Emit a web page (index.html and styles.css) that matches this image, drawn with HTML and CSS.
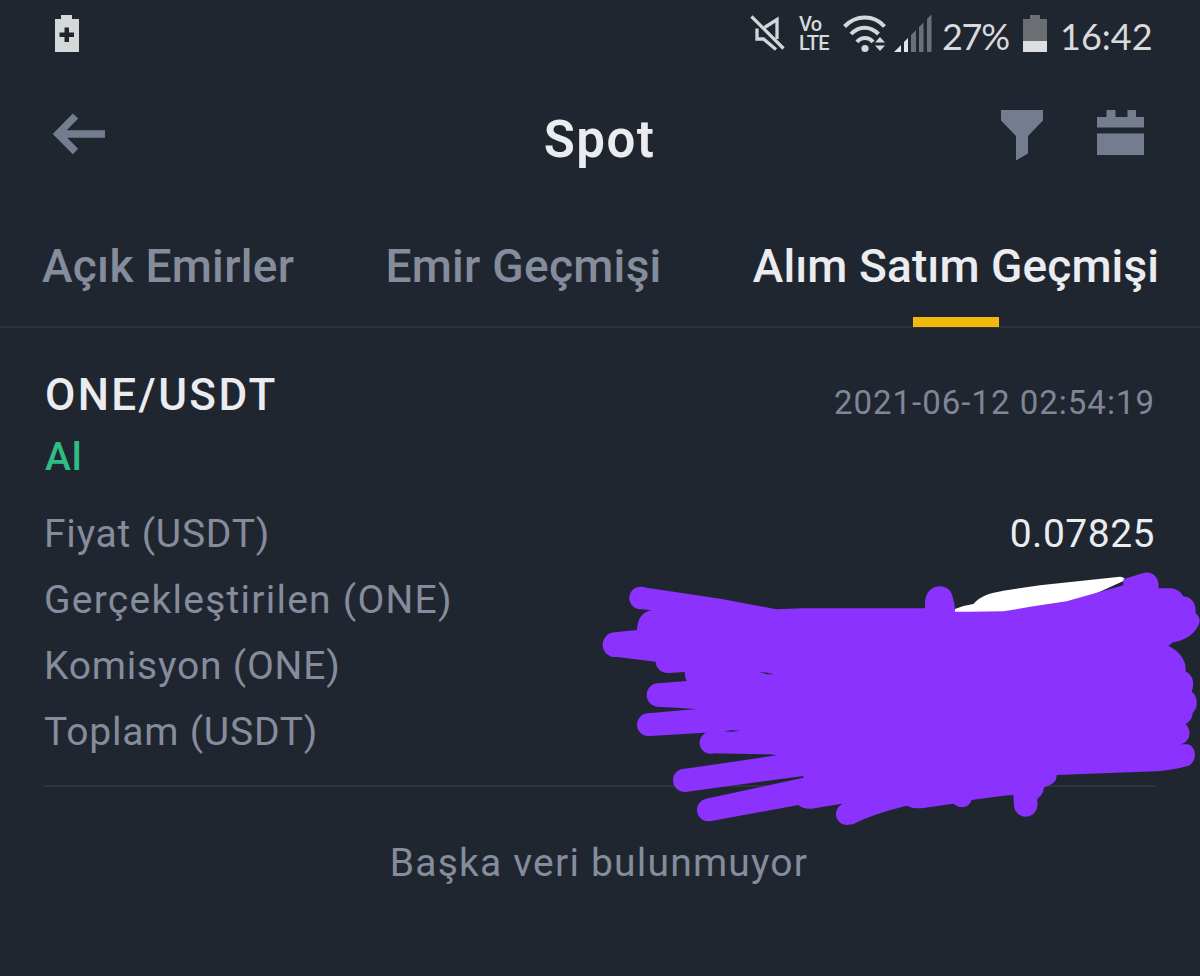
FILE: index.html
```html
<!DOCTYPE html>
<html lang="tr">
<head>
  <meta charset="UTF-8">
  <meta name="viewport" content="width=device-width, initial-scale=1.0">
  <title>Spot</title>
  <link rel="stylesheet" href="styles.css">
</head>
<body>
  <!-- status bar -->
  <div class="status-bar">
    <svg class="icon-saver" viewBox="0 0 24 38">
      <path fill="#d5d8d9" d="M0 4h6V0h11v4h7v33H0z"/>
      <path fill="#202630" d="M9.500 12.500H14v5h5V22h-5v5H9.500v-5h-5v-4.500h5z"/>
    </svg>
    <div class="status-right">
      <svg class="icon-mute" viewBox="0 0 36 40">
        <g fill="none" stroke="#d3d6d8" stroke-width="3.300">
          <path d="M1.500 1.500l32 32"/>
          <path d="M14.500 12.500L27 4.500V24"/>
          <path d="M7 13.500V24h6.500L26 34.500"/>
        </g>
      </svg>
      <div class="volte">Vo<br>LTE</div>
      <svg class="icon-wifi" viewBox="0 0 44 40">
        <g fill="none" stroke="#d5d8d9" stroke-width="4">
          <path d="M1.500 11.500C13-.500 31-.500 41.500 11.500"/>
          <path d="M8 19C16 10.500 27 10.500 35.500 19"/>
          <path d="M14 27C18 21.500 26 21.500 30 27"/>
        </g>
        <circle cx="22" cy="33.500" r="3.600" fill="#d5d8d9"/>
        <path fill="#d5d8d9" d="M37 22l5 5.500H32zM37 36l-5-5.500h10z"/>
      </svg>
      <svg class="icon-signal" viewBox="0 0 38 38">
        <path fill="#e2e4e5" d="M0 37l7-7v7zM10 27l4-4v14h-4z"/>
        <path fill="#6b7076" d="M17 20l5-5v22h-5zM25 12l4.500-4.500V37H25zM33 4l4.500-4.500V37H33z"/>
      </svg>
      <span class="percent">27%</span>
      <svg class="icon-battery" viewBox="0 0 24 38">
        <path fill="#6b6f74" d="M0 4h7V0h10v4h7v23H0z"/>
        <path fill="#dcdedf" d="M0 26h24v11H0z"/>
      </svg>
      <span class="clock">16:42</span>
    </div>
  </div>

  <!-- title bar -->
  <header class="header">
    <svg class="icon-back" viewBox="0 0 54 42">
      <path fill="none" stroke="#747d8f" stroke-width="7.500" d="M23.500 3L6 21l17.500 17.500M7 21h46"/>
    </svg>
    <h1>Spot</h1>
    <div class="header-actions">
      <svg class="icon-filter" viewBox="0 0 42 51">
        <path fill="#747d8f" d="M0 0h42v10.500L27 26v17.500L15 50.500V26L0 10.500z"/>
      </svg>
      <svg class="icon-calendar" viewBox="0 0 47 45">
        <path fill="#747d8f" d="M0 7h9.500V0h9v7h12V0H39v7h8v10.500H0zM0 23.500h47V45H0z"/>
      </svg>
    </div>
  </header>

  <nav class="tabs">
    <a class="tab">Açık Emirler</a>
    <a class="tab">Emir Geçmişi</a>
    <a class="tab active">Alım Satım Geçmişi</a>
  </nav>

  <main class="content">
    <div class="trade">
      <div class="trade-head">
        <h2>ONE/USDT</h2>
        <span class="date">2021-06-12 02:54:19</span>
      </div>
      <div class="side">Al</div>
      <div class="row"><span>Fiyat (USDT)</span><span class="value">0.07825</span></div>
      <div class="row"><span class="long">Gerçekleştirilen (ONE)</span></div>
      <div class="row"><span>Komisyon (ONE)</span></div>
      <div class="row"><span>Toplam (USDT)</span></div>

      <!-- hand-drawn marker over the amounts -->
      <svg class="scribble" viewBox="0 0 1830 840">
        <path fill="#fff" d="M1085 165L1095 147 1120 138 1150 132C1170 110 1190 101 1240 92L1350 76 1590 50Q1602 51 1607 60L1430 140 1300 170z"/>
        <g fill="#8b32ff">
          <path d="M150 80L400 118 560 148 640 145H1005V128C1007 68 1078 64 1088 110Q1095 130 1095 155H1140L1240 154 1330 139
            1430 124 1520 98 1600 76V58L1650 42 1665 38C1695 35 1710 62 1705 85H1745Q1768 88 1780 109C1805 110 1821 135 1816 158
            C1835 175 1832 190 1815 212Q1795 238 1750 247L1735 257Q1790 285 1787 335C1808 343 1815 368 1805 395Q1826 410 1818 445L1808 460Q1806 482 1787 492
            C1804 508 1805 545 1770 553H1790C1822 555 1824 610 1790 619Q1750 630 1700 634L1400 645Q1402 672 1362 682Q1360 705 1342 716
            V735H1272L1270 705 1240 707 1145 720C1135 745 1112 748 1090 731L1000 744Q970 748 950 737
            Q850 761 785 794L755 731 665 746Q640 748 625 735L360 784 345 717 640 653V648L290 695 275 628 560 586 540 583 362 580
            V518H342L180 528 175 460 320 447 205 440V370L290 363Q283 352 285 336L238 339V305H197L75 290V217L141 210Q143 158 185 151L150 147z"/>
          <circle cx="152" cy="114" r="34"/>
          <circle cx="75" cy="254" r="37"/>
          <circle cx="232" cy="304" r="35"/>
          <circle cx="205" cy="405" r="35"/>
          <circle cx="175" cy="494" r="34"/>
          <circle cx="362" cy="548" r="33"/>
          <circle cx="284" cy="661" r="35"/>
          <circle cx="355" cy="750" r="34"/>
          <circle cx="771" cy="762" r="33"/>
          <circle cx="1307" cy="735" r="35"/>
        </g>
        <path fill="#202630" d="M508 336L532 338 552 343H530zM402 514L425 511 450 512 425 515z"/>
      </svg>
    </div>
    <p class="no-more">Başka veri bulunmuyor</p>
  </main>
</body>
</html>
```
FILE: styles.css
```css
* {
  box-sizing: border-box;
}

body {
  margin: 0;
  height: 976px;
  background-color: #202630;
  color: #eaecef;
  font-family: Roboto, Arial, sans-serif;
  overflow: hidden;
}

svg {
  display: block;
  flex: none;
}

h1, h2, p {
  margin: 0;
}

/* status bar */
.status-bar {
  display: flex;
  justify-content: space-between;
  height: 70px;
  padding: 15px 48px 0 55px;
}

.icon-saver, .icon-battery {
  width: 24px;
  height: 38px;
}

.status-right {
  display: flex;
  color: #d8dadc;
  font-family: Lato, sans-serif;
  font-size: 36px;
  line-height: 42px;
}

.icon-mute {
  width: 36px;
  height: 40px;
  margin-right: 13px;
}

.volte {
  width: 30px;
  margin-right: 14px;
  font-family: Roboto, sans-serif;
  font-size: 20px;
  font-weight: 500;
  line-height: 19px;
  letter-spacing: -0.7px;
}

.icon-wifi {
  width: 44px;
  height: 40px;
  margin-right: 7px;
}

.icon-signal {
  width: 38px;
  height: 38px;
}

.percent {
  width: 80px;
  padding-left: 10px;
  letter-spacing: -1.3px;
}

.icon-battery {
  margin-left: 11px;
}

.clock {
  width: 105px;
  padding-left: 13px;
}

/* title bar */
.header {
  display: flex;
  justify-content: space-between;
  align-items: flex-start;
  height: 136px;
  padding: 40px 56px 0 52px;
}

.icon-back {
  width: 54px;
  height: 42px;
  margin-top: 3px;
}

.header h1 {
  margin-left: 92px;
  font-size: 51px;
  font-weight: 600;
  line-height: 60px;
  letter-spacing: 1.4px;
}

.header-actions {
  display: flex;
  gap: 54px;
}

.icon-filter {
  width: 42px;
  height: 51px;
}

.icon-calendar {
  width: 47px;
  height: 45px;
}

/* tabs */
.tabs {
  display: flex;
  justify-content: space-between;
  height: 122px;
  padding: 0 41px 0 42px;
  border-bottom: 2px solid #2d333e;
}

.tab {
  position: relative;
  color: #858c9c;
  font-size: 46px;
  font-weight: 500;
  line-height: 120px;
  letter-spacing: 0.3px;
}

.tab.active {
  color: #eaecef;
  letter-spacing: 0.1px;
}

.tab.active::after {
  content: "";
  position: absolute;
  left: 50%;
  bottom: -1px;
  width: 86px;
  height: 10px;
  margin-left: -43px;
  background-color: #f0b90b;
}

/* trade history */
.content {
  padding: 37px 45px 0 43px;
}

.trade {
  position: relative;
  height: 422px;
  border-bottom: 2px solid #2d333e;
}

.trade-head {
  display: flex;
  justify-content: space-between;
  height: 61px;
}

.trade-head h2 {
  padding-left: 2px;
  font-size: 44px;
  font-weight: 500;
  line-height: 60px;
  letter-spacing: 2.4px;
}

.date {
  padding-top: 15px;
  color: #7f8696;
  font-size: 33px;
  line-height: 46px;
  letter-spacing: 1px;
}

.side {
  height: 75px;
  padding-left: 2px;
  color: #2ebd85;
  font-size: 39px;
  font-weight: 500;
  line-height: 62px;
  letter-spacing: 1px;
}

.row {
  display: flex;
  justify-content: space-between;
  padding-left: 1px;
  color: #858c9c;
  font-size: 39px;
  line-height: 66px;
  letter-spacing: 0.8px;
}

.row .long {
  letter-spacing: 1.25px;
}

.row .value {
  color: #eaecef;
  letter-spacing: 0.5px;
}

.scribble {
  position: absolute;
  left: 547px;
  top: 195px;
  width: 610px;
  height: 280px;
}

.no-more {
  color: #858c9c;
  font-size: 39px;
  line-height: 153px;
  letter-spacing: 1.2px;
  text-align: center;
}
```
